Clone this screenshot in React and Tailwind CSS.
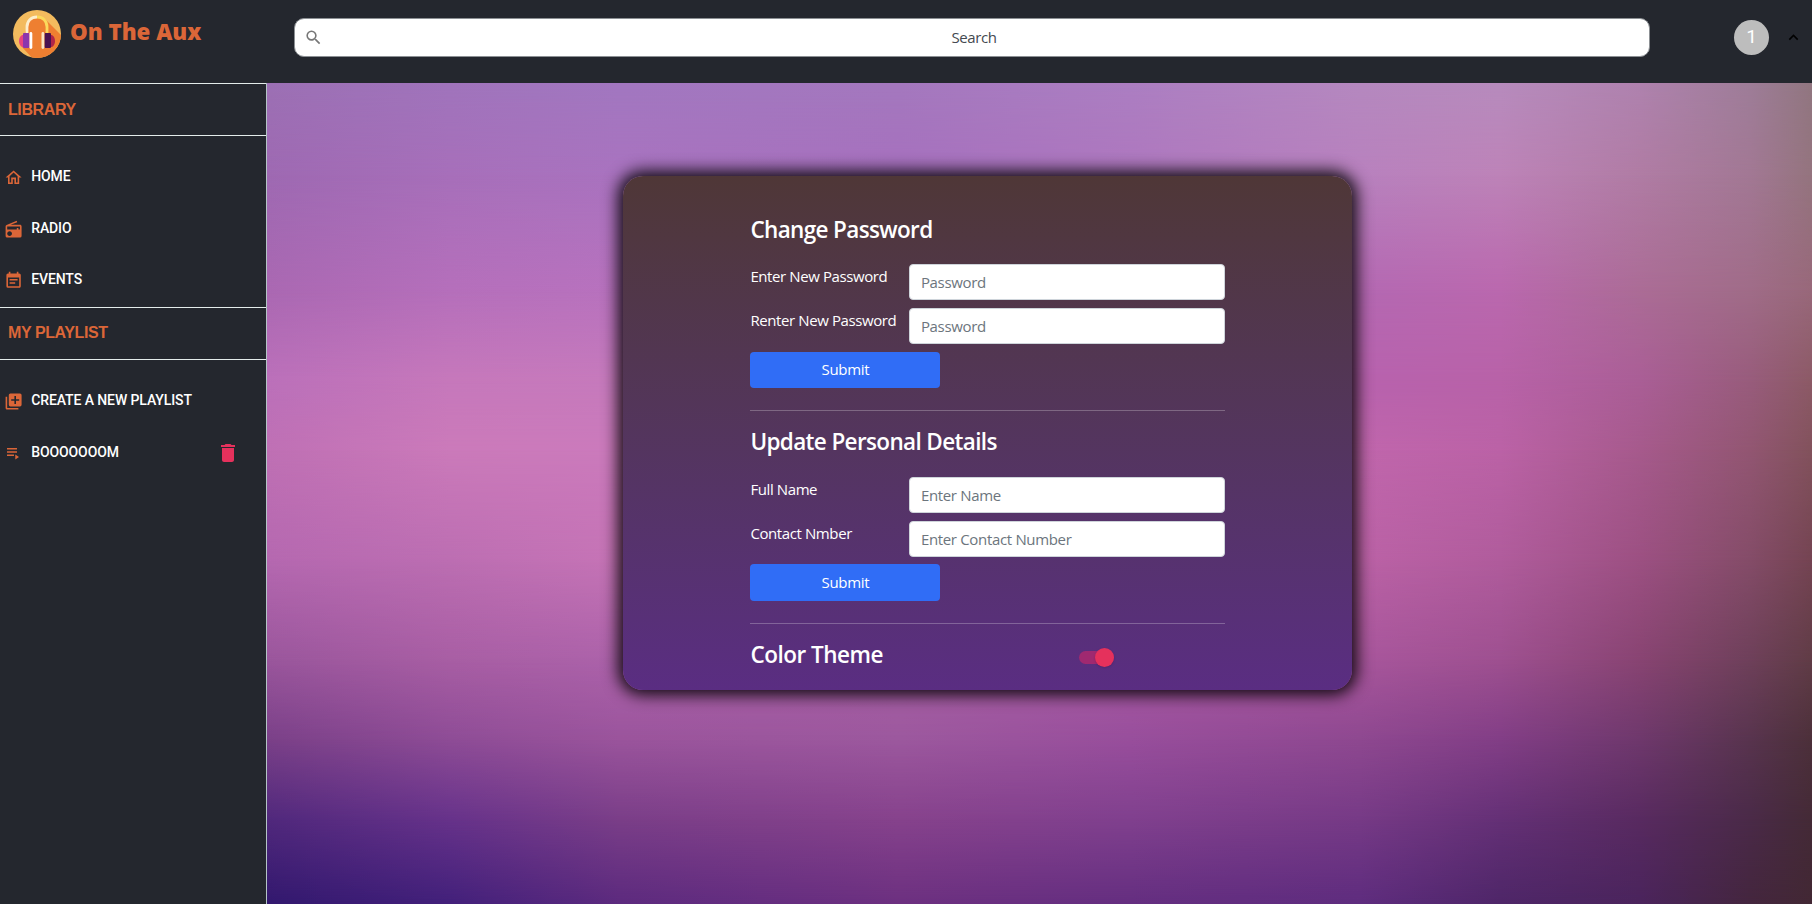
import React from "react";
import { MdSearch, MdOutlineHome, MdRadio, MdEventNote, MdLibraryAdd, MdDelete, MdExpandLess } from "react-icons/md";

const COLS = [267, 450, 620, 900, 1130, 1360, 1500, 1640, 1750, 1812];
const ROWS = [
  [83, "#9c70b4 #a074bc #a277c0 #a478be #ac7ec2 #b588bf #b78bbd #af82ae #9e7d98 #917680"],
  [175, "#9e69b2 #a76fba #a973bf #a670be #ae77be #b881be #bd83b8 #b07ca4 #a27894 #94747e"],
  [290, "#aa68b2 #b56fbb #b872be #b268b8 #b068b4 #b468b2 #ba68ae #ab6c96 #a06c88 #98687a"],
  [380, "#bb70ba #c678bb #c67abc #c070b8 #b868b0 #b862ae #b862a8 #aa5e96 #985c7c #8c5a66"],
  [450, "#bf70b4 #cb7aba #cb7abc #c472b8 #c06cb0 #c066ac #bb62a6 #a65a8c #925672 #82525c"],
  [560, "#b568b0 #bc6eb2 #c674b6 #c06cb0 #bc66a8 #bb62a6 #b05c9c #9c5082 #844c68 #744452"],
  [660, "#9a569c #a85ea4 #ac62aa #a860a4 #a85aa2 #a8569c #9e5090 #884472 #6e405a #603c46"],
  [740, "#7a4088 #8e4c96 #9a549c #9c589e #984e9c #8e4890 #823e86 #6e386c #58344e #4c303a"],
  [820, "#50287c #66328a #7a3e88 #86428c #80408e #763a86 #643076 #582a60 #4a2a48 #442a36"],
  [904, "#32186e #42207a #5c2a7e #6c3080 #642e80 #5e2c7e #4e2668 #4a245c #44263e #422834"],
];

// Blurred backdrop: each row of colours fades into the one below it.
function Backdrop() {
  return (
    <div className="absolute inset-0">
      {ROWS.map(([y, colors], i) => {
        const stops = colors.split(" ").map((c, k) => `${c} ${(((COLS[k] - 267) / 1545) * 100).toFixed(2)}%`).join(", ");
        const mask = i === 0 ? "none" : `linear-gradient(to bottom, transparent ${ROWS[i - 1][0] - 83}px, black ${y - 83}px)`;
        return <div key={y} className="absolute inset-0" style={{ background: `linear-gradient(to right, ${stops})`, maskImage: mask }} />;
      })}
    </div>
  );
}

function Logo() {
  return (
    <svg className="h-12 w-12 shrink-0" viewBox="0 0 48 48">
      <defs><clipPath id="disc"><circle cx="24" cy="24" r="24" /></clipPath></defs>
      <g clipPath="url(#disc)">
        <rect width="48" height="48" fill="#f3bb5e" />
        <path d="M32 9 54 31V50H21L9 37l6-25z" fill="#ee7f31" />
        <path d="M14 26V17a10 10 0 0 1 20 0v9" fill="#ee7f31" />
        <path d="M14 24V17C14 11 18 7 24 7" fill="none" stroke="#fdeecb" strokeWidth="2.800" />
        <path d="M24 7c6 0 10 4 10 10v7" fill="none" stroke="#fbd95c" strokeWidth="2.800" />
        <path d="M11 25H9q-3 2-3 6t3 6h2z" fill="#e8437f" />
        <path d="M37 25h2q3 2 3 6t-3 6h-2z" fill="#b02548" />
        <rect x="10" y="23" width="6.500" height="15" rx="1" fill="#8b36ad" />
        <rect x="31.500" y="23" width="6.500" height="15" rx="1" fill="#4a1150" />
        <rect x="16.500" y="22" width="2.800" height="17" rx="1.400" fill="#fff" />
        <rect x="28.500" y="22" width="2.800" height="17" rx="1.400" fill="#fbe6c4" />
      </g>
    </svg>
  );
}

function PlaylistIcon({ className }) {
  return (
    <svg className={className} viewBox="0 0 19.2 19.2" fill="currentColor">
      <path d="M3 4h10v1.600H3zM3 7.200h10v1.600H3zM3 10.400h7v1.600H3zM11.300 10.400v5l3.700-2.500z" />
    </svg>
  );
}

function SectionTitle({ children }) {
  return (
    <h2 className="flex h-[53px] items-center border-y border-[#e4eceb] pl-[8px] font-['Liberation_Sans'] text-[16px] font-bold tracking-[-0.4px] text-[#db6638]">
      {children}
    </h2>
  );
}

function Item({ icon: Icon, label, children }) {
  return (
    <li className="flex h-[51.600px] items-center pl-[4.400px]">
      <Icon className="h-[19.200px] w-[19.200px] shrink-0 text-[#db6638]" />
      <span className="-mt-[2px] ml-[7.600px] grow font-[Roboto] text-[14px] font-medium tracking-[-0.1px] text-white">{label}</span>
      {children}
    </li>
  );
}

function Field({ label, placeholder }) {
  return (
    <div className="mb-[7.400px] flex">
      <label className="w-[158.500px] shrink-0 text-[15px] leading-[24px] tracking-[-0.4px] whitespace-nowrap text-white">{label}</label>
      <input placeholder={placeholder} className="h-[36.300px] min-w-0 grow rounded border border-[#ced4da] bg-white px-[11px] text-[15px] tracking-[-0.33px] placeholder:text-[#6c757d]" />
    </div>
  );
}

function FormSection({ title, fields, className }) {
  return (
    <section className={className}>
      <h3 className="mb-[20.500px] text-[22.500px] leading-[29px] font-semibold tracking-[-0.64px] text-white">{title}</h3>
      {fields.map(([label, ph]) => <Field key={label} label={label} placeholder={ph} />)}
      <button className="block h-[36.300px] w-[190px] rounded bg-[#306df6] text-[15px] tracking-[-0.3px] text-white">Submit</button>
    </section>
  );
}

export default function App() {
  return (
    <div className="flex h-[904px] w-[1812px] flex-col overflow-hidden bg-[#24272e] font-['Open_Sans',sans-serif]">
      <header className="flex h-[83px] shrink-0 items-start">
        <div className="flex w-[294px] shrink-0 items-start gap-[9px] pt-[10px] pl-[13px]">
          <Logo />
          <h1 className="mt-[4px] text-[22.300px] leading-[36px] font-extrabold whitespace-nowrap text-[#db6638]">On The Aux</h1>
        </div>
        <div className="mt-[18px] flex h-[39px] w-[1356px] items-center rounded-[10px] border border-[#8c9094] bg-white">
          <MdSearch className="ml-[9px] h-[19px] w-[19px] text-[#777]" />
          <span className="mr-[24px] grow text-center text-[15px] tracking-[-0.45px] text-[#444950]">Search</span>
        </div>
        <div className="mt-[20px] ml-[84px] flex h-[35px] w-[35px] items-center justify-center rounded-full bg-[#bdbdbd] font-[Roboto] text-[19px] text-white">1</div>
        <MdExpandLess className="mt-[28px] ml-[15px] h-[19px] w-[19px] text-black" />
      </header>
      <div className="flex min-h-0 grow">
        <aside className="w-[267px] shrink-0 border-r border-[#b4c4c6]">
          <SectionTitle>LIBRARY</SectionTitle>
          <ul className="pt-[16px]">
            <Item icon={MdOutlineHome} label="HOME" />
            <Item icon={MdRadio} label="RADIO" />
            <Item icon={MdEventNote} label="EVENTS" />
          </ul>
          <SectionTitle>MY PLAYLIST</SectionTitle>
          <ul className="pt-[16px]">
            <Item icon={MdLibraryAdd} label="CREATE A NEW PLAYLIST" />
            <Item icon={PlaylistIcon} label="BOOOOOOOM">
              <MdDelete className="mr-[26px] h-6 w-6 text-[#e5315c]" />
            </Item>
          </ul>
        </aside>
        <main className="relative grow">
          <Backdrop />
          <div className="relative mt-[93px] ml-[356px] h-[514px] w-[729px] rounded-[20px] bg-linear-to-b from-[#4f3737] to-[#5a2d82] pt-[38.700px] pr-[127px] pl-[127.400px] shadow-[0_0_16px_5px_rgba(0,0,0,0.9)]">
            <FormSection title="Change Password" fields={[["Enter New Password", "Password"], ["Renter New Password", "Password"]]} />
            <hr className="mt-[22.500px] border-white/25" />
            <FormSection className="mt-[16px]" title="Update Personal Details" fields={[["Full Name", "Enter Name"], ["Contact Nmber", "Enter Contact Number"]]} />
            <hr className="mt-[22.500px] border-white/25" />
            <div className="mt-[16px] flex">
              <h3 className="w-[328.500px] text-[22.500px] leading-[29px] font-semibold tracking-[-0.5px] text-white">Color Theme</h3>
              <div className="mt-[11px] flex h-[13px] w-[35px] items-center justify-end rounded-full bg-[#9f2970]">
                <div className="h-[19px] w-[19px] shrink-0 rounded-full bg-[#e5315c] shadow" />
              </div>
            </div>
          </div>
        </main>
      </div>
    </div>
  );
}
